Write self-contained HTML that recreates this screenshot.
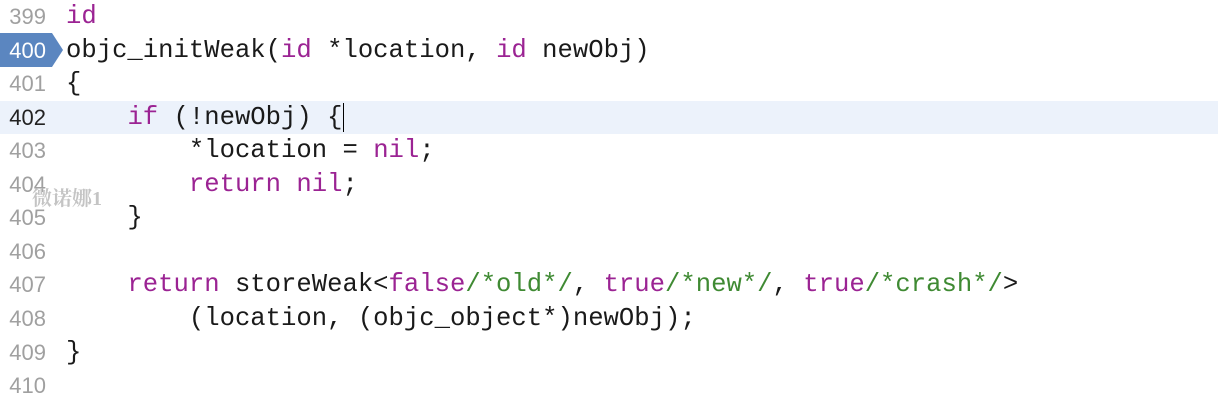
<!DOCTYPE html>
<html><head><meta charset="utf-8"><style>
html,body{margin:0;padding:0;background:#fff;width:1218px;height:406px;overflow:hidden}
.r{position:absolute;left:0;width:1218px;height:33.55px;line-height:33.55px}
.n{position:absolute;right:1172px;font-family:"Liberation Sans",sans-serif;font-size:22px;color:#a0a0a0;white-space:nowrap}
.c{position:absolute;left:66px;font-family:"Liberation Mono",monospace;font-size:25.6px;color:#1a1a1a;white-space:pre}
.k{color:#9b2393}.g{color:#3f8a33}
.hl{background:#ecf2fb}
</style></head><body>
<div class="r" style="top:0"><span class="n">399</span><span class="c"><span class="k">id</span></span></div>
<svg style="position:absolute;left:0;top:33px" width="64" height="34"><polygon points="0,0 52,0 63,17 52,34 0,34" fill="#5b86c0"/></svg>
<div class="r" style="top:33.55px"><span class="n" style="color:#fff">400</span><span class="c">objc_initWeak(<span class="k">id</span> *location, <span class="k">id</span> newObj)</span></div>
<div class="r" style="top:67.1px"><span class="n">401</span><span class="c">{</span></div>
<div class="r hl" style="top:100.65px"><span class="n" style="color:#222">402</span><span class="c">    <span class="k">if</span> (!newObj) {<span style="border-left:1.5px solid #000;margin-left:1px"></span></span></div>
<div class="r" style="top:134.2px"><span class="n">403</span><span class="c">        *location = <span class="k">nil</span>;</span></div>
<div class="r" style="top:167.75px"><span class="n">404</span><span class="c">        <span class="k">return</span> <span class="k">nil</span>;</span></div>
<div style="position:absolute;left:32px;top:182px;font-family:'Liberation Serif','Noto Serif CJK SC',serif;font-size:20px;font-weight:bold;color:#c4c4c4">微诺娜1</div>
<div class="r" style="top:201.3px"><span class="n">405</span><span class="c">    }</span></div>
<div class="r" style="top:234.85px"><span class="n">406</span><span class="c"></span></div>
<div class="r" style="top:268.4px"><span class="n">407</span><span class="c">    <span class="k">return</span> storeWeak&lt;<span class="k">false</span><span class="g">/*old*/</span>, <span class="k">true</span><span class="g">/*new*/</span>, <span class="k">true</span><span class="g">/*crash*/</span>&gt;</span></div>
<div class="r" style="top:301.95px"><span class="n">408</span><span class="c">        (location, (objc_object*)newObj);</span></div>
<div class="r" style="top:335.5px"><span class="n">409</span><span class="c">}</span></div>
<div class="r" style="top:369.05px"><span class="n">410</span><span class="c"></span></div>
</body></html>
